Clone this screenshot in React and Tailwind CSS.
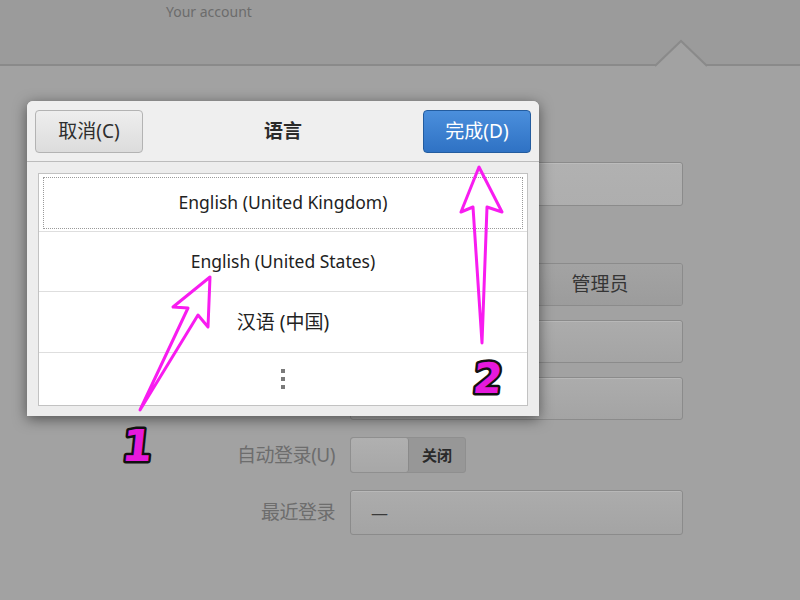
import React from "react";

const font = { fontFamily: '"Noto Sans", "Noto Sans CJK SC", sans-serif' };

function Field({ children, className = "" }) {
  return (
    <div
      className={
        "h-full w-[333px] rounded-[3px] border border-[#8b8b8b] bg-gradient-to-b from-[#acacac] to-[#a4a4a4] shadow-[inset_0_1px_0_rgba(255,255,255,0.15)] flex items-center " +
        className
      }
    >
      {children}
    </div>
  );
}

function Row({ label, h, mt, children }) {
  return (
    <div className={"flex items-center " + h + " " + mt}>
      <div className="w-[336px] pr-[1px] text-right text-[19px] text-[#6d6d6d] tracking-tight">
        {label}
      </div>
      <div className="ml-[14px] h-full flex items-center">{children}</div>
    </div>
  );
}

function LangRow({ children, h, focus, last }) {
  return (
    <div
      className={
        "flex items-center justify-center " +
        h +
        (last ? "" : " border-b border-[#dedede]")
      }
    >
      {focus ? (
        <div className="mx-[4px] h-[52px] w-full border border-dotted border-[#9a9a9a] flex items-center justify-center">
          {children}
        </div>
      ) : (
        children
      )}
    </div>
  );
}

export default function App() {
  return (
    <div
      className="relative w-[800px] h-[600px] overflow-hidden bg-[#a2a2a2] text-[#2b2b2b]"
      style={font}
    >
      {/* top header */}
      <div className="h-[66px] bg-[#9b9b9b] border-b-2 border-[#8a8a8a] pl-[166px] pt-[2px]">
        <div className="text-[14px] leading-[20px] text-[#6c6c6c]">Your account</div>
      </div>

      {/* background form */}
      <div className="flex flex-col pt-[96px]">
        <Row label="" h="h-[44px]" mt="">
          <Field className="from-[#b1b1b1] to-[#aeaeae]" />
        </Row>
        <Row label="" h="h-[43px]" mt="mt-[57px]">
          <div className="flex h-full w-[333px] rounded-[3px] border border-[#8b8b8b] overflow-hidden">
            <div className="w-[167px] h-full border-r border-[#8b8b8b] bg-[#a9a9a9]" />
            <div className="flex-1 h-full bg-gradient-to-b from-[#a3a3a3] to-[#9c9c9c] flex items-center justify-center text-[19px] text-[#353535]">
              管理员
            </div>
          </div>
        </Row>
        <Row label="" h="h-[43px]" mt="mt-[14px]">
          <Field />
        </Row>
        <Row label="" h="h-[43px]" mt="mt-[14px]">
          <Field />
        </Row>
        <Row label="自动登录(U)" h="h-[36px]" mt="mt-[17px]">
          <div className="flex h-full w-[116px] rounded-[3px] border border-[#8f8f8f] overflow-hidden bg-[#979797]">
            <div className="w-[58px] h-full rounded-[3px] border-r border-[#8a8a8a] bg-gradient-to-b from-[#b0b0b0] to-[#a7a7a7]" />
            <div className="flex-1 flex items-center justify-center text-[15px] font-bold text-[#2a2a2a]">
              关闭
            </div>
          </div>
        </Row>
        <Row label="最近登录" h="h-[45px]" mt="mt-[17px]">
          <Field className="pl-[20px] text-[17px] text-[#3a3a3a]">—</Field>
        </Row>
      </div>

      {/* notch in header line */}
      <svg className="absolute left-[655px] top-[38px]" width="52" height="32" viewBox="0 0 52 32">
        <polygon points="0,28 26,3 52,28 52,32 0,32" fill="#a2a2a2" />
        <polyline points="0,28 26,3 52,28" fill="none" stroke="#8a8a8a" strokeWidth="2" />
      </svg>

      {/* dialog */}
      <div className="absolute left-[27px] top-[101px] w-[512px] h-[315px] rounded-t-[6px] bg-[#ededed] shadow-[0_3px_14px_rgba(0,0,0,0.5)] flex flex-col">
        <div className="h-[61px] flex items-center justify-between px-[8px] border-b border-[#bcbcbc] rounded-t-[6px] bg-[#efefef]">
          <div className="w-[108px] h-[43px] rounded-[4px] border border-[#b3b3b3] bg-gradient-to-b from-[#eeeeee] to-[#dcdcdc] flex items-center justify-center text-[19px] text-[#2e2e2e]">
            取消(C)
          </div>
          <div className="text-[19px] font-bold text-[#2a2a2a]">语言</div>
          <div className="w-[108px] h-[43px] rounded-[4px] border border-[#235c9f] bg-gradient-to-b from-[#4b8fdc] to-[#2f72c4] flex items-center justify-center text-[19px] text-white">
            完成(D)
          </div>
        </div>
        <div className="mt-[11px] mx-[11px] h-[233px] bg-white border border-[#c2c2c2] flex flex-col overflow-hidden">
          <LangRow h="h-[58px]" focus>
            <span className="text-[17.5px] text-[#222]">English (United Kingdom)</span>
          </LangRow>
          <LangRow h="h-[60px]">
            <span className="text-[17.5px] text-[#222]">English (United States)</span>
          </LangRow>
          <LangRow h="h-[61px]">
            <span className="text-[19px] text-[#222]">汉语 (中国)</span>
          </LangRow>
          <LangRow h="h-[52px]" last>
            <div className="flex flex-col gap-[4px] items-center">
              <div className="w-[4px] h-[4px] bg-[#7a7a7a]" />
              <div className="w-[4px] h-[4px] bg-[#7a7a7a]" />
              <div className="w-[4px] h-[4px] bg-[#7a7a7a]" />
            </div>
          </LangRow>
        </div>
      </div>

      {/* annotations */}
      <svg className="absolute left-0 top-0 pointer-events-none" width="800" height="600" viewBox="0 0 800 600">
        <polygon
          points="210,277 173,307 188,308 140,410 198,315 208,327"
          fill="none"
          stroke="#f81cf0"
          strokeWidth="3"
          strokeLinejoin="round"
        />
        <polygon
          points="479,167 461,212 473,207 482,343 487,207 502,212"
          fill="none"
          stroke="#f81cf0"
          strokeWidth="3"
          strokeLinejoin="round"
        />
        <text
          x="121"
          y="461"
          fontSize="44"
          fontWeight="900"
          fontFamily="DejaVu Sans, sans-serif"
          fill="#e619dc"
          stroke="#111"
          strokeWidth="5"
          strokeLinejoin="round"
          paintOrder="stroke"
          transform="skewX(-6) translate(48,0)"
        >
          1
        </text>
        <text
          x="472"
          y="393"
          fontSize="42"
          fontWeight="900"
          fontFamily="DejaVu Sans, sans-serif"
          fill="#e619dc"
          stroke="#111"
          strokeWidth="5"
          strokeLinejoin="round"
          paintOrder="stroke"
          transform="skewX(-6) translate(41,0)"
        >
          2
        </text>
      </svg>
    </div>
  );
}
